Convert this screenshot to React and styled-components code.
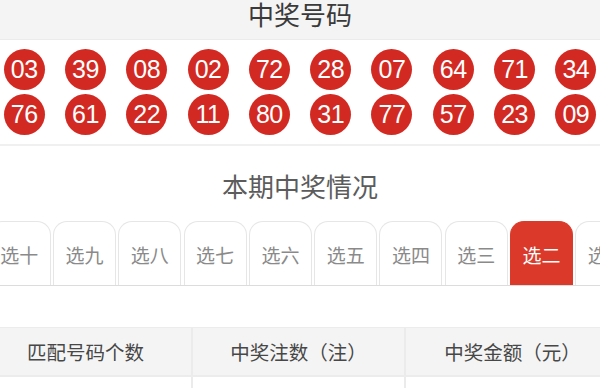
import React from "react";
import styled, { createGlobalStyle } from "styled-components";

const Global = createGlobalStyle`
  html, body { margin: 0; padding: 0; background: #fff; }
  body { width: 600px; overflow: hidden; font-family: "Noto Sans CJK SC", "Liberation Sans", sans-serif; }
`;

const Page = styled.div`
  width: 600px;
  overflow: hidden;
  display: flex;
  flex-direction: column;
`;

const Header = styled.div`
  height: 39px;
  background: #f4f4f4;
  border-bottom: 1px solid #ebebeb;
  display: flex;
  justify-content: center;
  align-items: flex-start;
`;

const Title = styled.div`
  font-size: 26px;
  line-height: 27px;
  color: ${(p) => p.color || "#3a3a3a"};
  text-align: center;
`;

const BallSection = styled.div`
  padding: 9px 0 9px;
  border-bottom: 2px solid #f0f0f0;
  display: flex;
  justify-content: center;
`;

const BallGrid = styled.div`
  display: grid;
  grid-template-columns: repeat(10, 61.3px);
  grid-auto-rows: 41px;
  row-gap: 4px;
  flex-shrink: 0;
  justify-items: center;
`;

const Ball = styled.div`
  width: 41px;
  height: 41px;
  border-radius: 50%;
  background: #d22a22;
  color: #fff;
  font-family: "Liberation Sans", Arial, sans-serif;
  font-size: 25px;
  display: flex;
  align-items: center;
  justify-content: center;
  letter-spacing: -0.5px;
`;

const SectionTitle = styled.div`
  padding-top: 26px;
  display: flex;
  justify-content: center;
`;

const TabsRow = styled.div`
  margin-top: 21px;
  height: 65px;
  border-bottom: 1px solid #dcdcdc;
  display: flex;
  gap: 2.3px;
  margin-left: -12.3px;
  align-items: flex-end;
`;

const Tab = styled.div`
  flex: 0 0 63px;
  height: 64px;
  box-sizing: border-box;
  border: 1px solid ${(p) => (p.active ? "#db3a2b" : "#e6e6e6")};
  border-bottom: none;
  border-radius: 14px 14px 0 0;
  background: ${(p) => (p.active ? "#db3a2b" : "#fff")};
  color: ${(p) => (p.active ? "#fff" : "#8a8a8a")};
  font-size: 19px;
  display: flex;
  align-items: center;
  justify-content: center;
  padding-top: 2px;
`;

const Table = styled.div`
  margin-top: 41px;
  margin-left: -20px;
  width: 639px;
  display: grid;
  grid-template-columns: repeat(3, 213px);
  flex-shrink: 0;
`;

const HeadCell = styled.div`
  height: 50px;
  box-sizing: border-box;
  background: #f4f4f4;
  border-top: 1px solid #ececec;
  border-bottom: 2px solid #ececec;
  border-right: ${(p) => (p.last ? "none" : "2px solid #ebebeb")};
  color: #474747;
  font-size: 19.5px;
  display: flex;
  align-items: center;
  justify-content: center;
`;

const BodyCell = styled.div`
  height: 30px;
  box-sizing: border-box;
  border-right: ${(p) => (p.last ? "none" : "2px solid #ebebeb")};
`;

const row1 = ["03", "39", "08", "02", "72", "28", "07", "64", "71", "34"];
const row2 = ["76", "61", "22", "11", "80", "31", "77", "57", "23", "09"];
const tabs = ["选十", "选九", "选八", "选七", "选六", "选五", "选四", "选三", "选二", "选一"];
const heads = ["匹配号码个数", "中奖注数（注）", "中奖金额（元）"];

export default function App() {
  return (
    <Page>
      <Global />
      <Header>
        <Title>中奖号码</Title>
      </Header>
      <BallSection>
        <BallGrid>
          {[...row1, ...row2].map((n, i) => (
            <Ball key={i}>{n}</Ball>
          ))}
        </BallGrid>
      </BallSection>
      <SectionTitle>
        <Title color="#5c5c5c">本期中奖情况</Title>
      </SectionTitle>
      <TabsRow>
        {tabs.map((t) => (
          <Tab key={t} active={t === "选二"}>
            {t}
          </Tab>
        ))}
      </TabsRow>
      <Table>
        {heads.map((h, i) => (
          <HeadCell key={h} last={i === 2}>
            {h}
          </HeadCell>
        ))}
        {heads.map((h, i) => (
          <BodyCell key={h} last={i === 2} />
        ))}
      </Table>
    </Page>
  );
}
